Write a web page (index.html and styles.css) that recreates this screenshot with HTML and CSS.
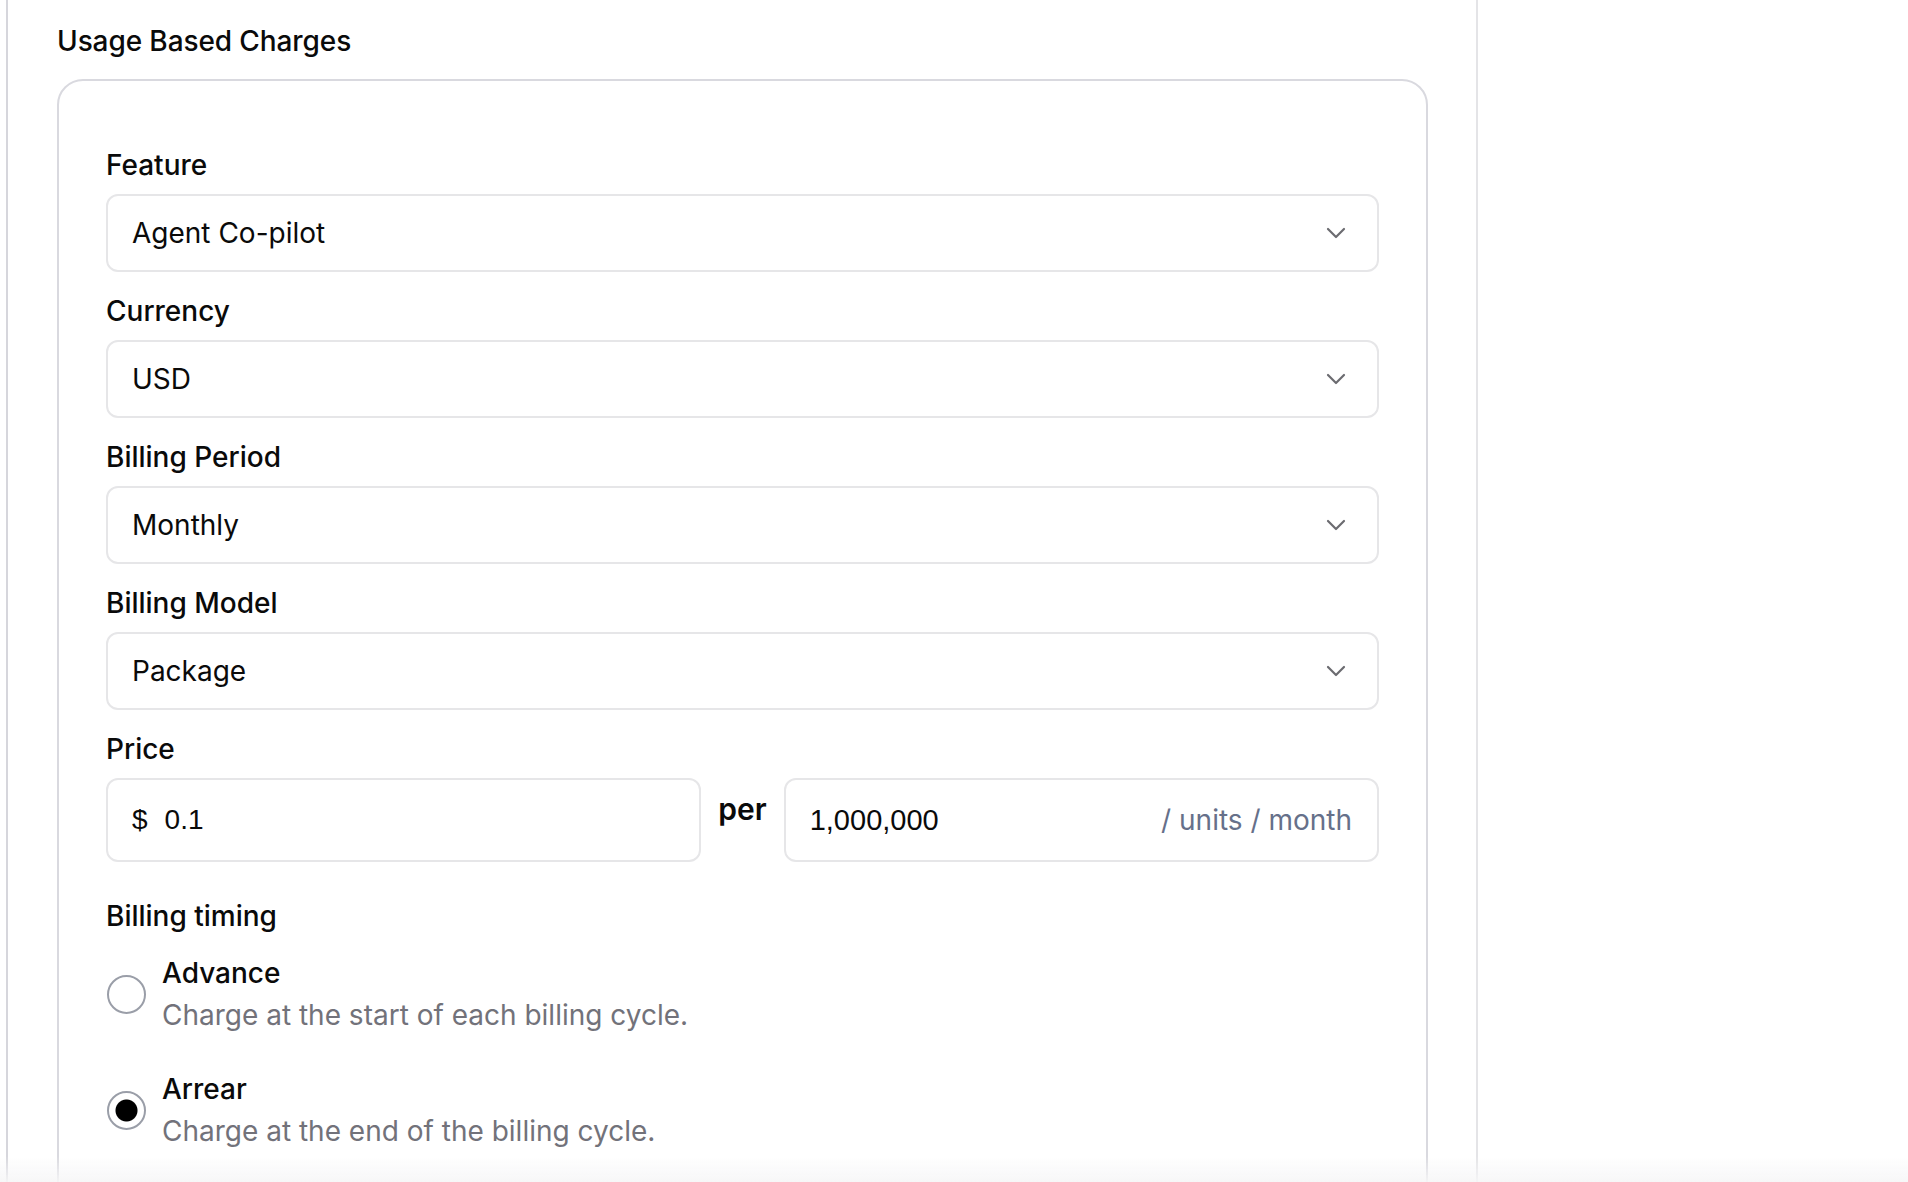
FILE: index.html
```html
<!DOCTYPE html>
<html lang="en">
<head>
<meta charset="utf-8">
<title>Usage Based Charges</title>
<link rel="stylesheet" href="styles.css">
</head>
<body>
<div class="page">
  <main class="column">
    <h2 class="title">Usage Based Charges</h2>
    <section class="card">
      <div class="field">
        <label class="label">Feature</label>
        <div class="select"><span class="value">Agent Co-pilot</span>
          <svg class="chev" viewBox="0 0 20 12" width="20" height="12"><path d="M2 2 L10 10 L18 2" fill="none" stroke="#6b6b70" stroke-width="2.2" stroke-linecap="round" stroke-linejoin="round"/></svg>
        </div>
      </div>
      <div class="field">
        <label class="label">Currency</label>
        <div class="select"><span class="value">USD</span>
          <svg class="chev" viewBox="0 0 20 12" width="20" height="12"><path d="M2 2 L10 10 L18 2" fill="none" stroke="#6b6b70" stroke-width="2.2" stroke-linecap="round" stroke-linejoin="round"/></svg>
        </div>
      </div>
      <div class="field">
        <label class="label">Billing Period</label>
        <div class="select"><span class="value">Monthly</span>
          <svg class="chev" viewBox="0 0 20 12" width="20" height="12"><path d="M2 2 L10 10 L18 2" fill="none" stroke="#6b6b70" stroke-width="2.2" stroke-linecap="round" stroke-linejoin="round"/></svg>
        </div>
      </div>
      <div class="field">
        <label class="label">Billing Model</label>
        <div class="select"><span class="value">Package</span>
          <svg class="chev" viewBox="0 0 20 12" width="20" height="12"><path d="M2 2 L10 10 L18 2" fill="none" stroke="#6b6b70" stroke-width="2.2" stroke-linecap="round" stroke-linejoin="round"/></svg>
        </div>
      </div>
      <div class="field">
        <label class="label">Price</label>
        <div class="price-row">
          <div class="input"><span class="cur">$</span><span class="num">0.1</span></div>
          <span class="per">per</span>
          <div class="input"><span class="num big">1,000,000</span><span class="suffix">/ units / month</span></div>
        </div>
      </div>
      <div class="timing">
        <div class="label">Billing timing</div>
        <div class="options">
          <div class="option">
            <span class="radio"></span>
            <div class="opt-text">
              <div class="opt-title">Advance</div>
              <div class="opt-desc">Charge at the start of each billing cycle.</div>
            </div>
          </div>
          <div class="option">
            <span class="radio checked"></span>
            <div class="opt-text">
              <div class="opt-title">Arrear</div>
              <div class="opt-desc">Charge at the end of the billing cycle.</div>
            </div>
          </div>
        </div>
      </div>
    </section>
  </main>
  <aside class="side"></aside>
</div>
<div class="fade"></div>
</body>
</html>
```

FILE: styles.css
```css
* { box-sizing: border-box; }
html, body { margin: 0; padding: 0; background: #ffffff; }
body {
  font-family: Inter, "Noto Sans", sans-serif;
  color: #0a0a0a;
  height: 1182px;
  overflow: hidden;
}
.page {
  display: flex;
  height: 100%;
  padding-left: 6px;
}
.column {
  width: 1472px;
  border-left: 2px solid #d6d6dc;
  border-right: 2px solid #e4e4e7;
  padding: 20px 48px 0 49px;
  height: 100%;
}
.side { flex: 1; }
.title {
  margin: 0 0 17px 0;
  font-size: 28px;
  line-height: 42px;
  font-weight: 500;
  letter-spacing: -0.1px;
}
.card {
  border: 2px solid #d9d9df;
  border-radius: 26px;
  padding: 63px 47px 40px 47px;
  height: 1200px;
}
.field { margin-bottom: 18px; }
.label {
  display: block;
  font-size: 28px;
  line-height: 42px;
  font-weight: 500;
  margin-bottom: 8px;
}
.select {
  height: 78px;
  border: 2px solid #e6e6e8;
  border-radius: 12px;
  display: flex;
  align-items: center;
  justify-content: space-between;
  padding: 0 31px 0 24px;
}
.value { font-size: 28px; line-height: 42px; }
.chev { display: block; }
.price-row {
  display: grid;
  grid-template-columns: 1fr auto 1fr;
  gap: 17px;
  align-items: start;
}
.input {
  height: 84px;
  border: 2px solid #e6e6e8;
  border-radius: 12px;
  display: flex;
  align-items: center;
  padding: 0 25px 0 24px;
  font-family: "Liberation Sans", Arial, sans-serif;
  font-size: 28px;
}
.cur { margin-right: 17px; }
.num { flex: 1; }
.num.big { font-size: 29px; }
.suffix {
  font-family: Inter, "Noto Sans", sans-serif;
  color: #66708a;
  font-size: 28px;
}
.per {
  font-size: 30px;
  font-weight: 600;
  line-height: 42px;
  margin-top: 10px;
}
.timing { margin-top: 33px; }
.timing .label { margin-bottom: 15px; }
.options { display: flex; flex-direction: column; gap: 32px; }
.option { display: flex; align-items: center; gap: 16px; }
.radio {
  width: 39px;
  height: 39px;
  flex: none;
  border-radius: 50%;
  border: 2px solid #9a9ea8;
  background: #fff;
  margin-left: 1px;
}
.radio.checked {
  background: radial-gradient(circle, #000 0 10.5px, #fff 11.5px);
}
.opt-title { font-size: 28px; line-height: 42px; font-weight: 500; }
.opt-desc { font-size: 28px; line-height: 42px; color: #72727a; }
.fade {
  position: fixed;
  left: 0;
  right: 0;
  bottom: 0;
  height: 26px;
  background: linear-gradient(to bottom, rgba(246,246,247,0), rgba(246,246,247,0.9));
  pointer-events: none;
}
```
